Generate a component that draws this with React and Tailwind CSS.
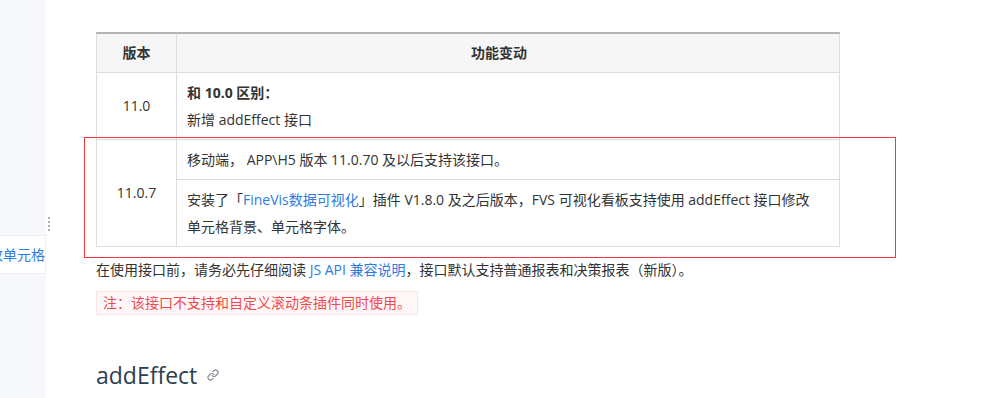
const font = { fontFamily: '"Open Sans", "Noto Sans CJK SC", sans-serif' };

function Sidebar() {
  return (
    <aside className="relative w-[46px] shrink-0 bg-[#f7f8fb]">
      <div className="mt-[235px] flex h-[39px] w-[46px] items-center justify-end overflow-hidden border-y border-r border-[#ebedf0] bg-white">
        <span className="whitespace-nowrap text-[14px] text-[#2f7bdf]">修改单元格</span>
      </div>
      {/* resize handle */}
      <div className="absolute left-[48px] top-[217px] flex flex-col gap-[2px]">
        <span className="block h-[2px] w-[2px] bg-[#aeb3bb]" />
        <span className="block h-[2px] w-[2px] bg-[#aeb3bb]" />
        <span className="block h-[2px] w-[2px] bg-[#aeb3bb]" />
        <span className="block h-[2px] w-[2px] bg-[#aeb3bb]" />
      </div>
    </aside>
  );
}

function LinkIcon() {
  return (
    <svg width="12" height="12" viewBox="0 0 24 24" fill="none" stroke="#8a8f99" strokeWidth="2.4" strokeLinecap="round" strokeLinejoin="round">
      <path d="M10 13a5 5 0 0 0 7.54.54l3-3a5 5 0 0 0-7.07-7.07l-1.72 1.71" />
      <path d="M14 11a5 5 0 0 0-7.54-.54l-3 3a5 5 0 0 0 7.07 7.07l1.71-1.71" />
    </svg>
  );
}

function VersionTable() {
  return (
    <table className="w-[744px] border-collapse text-[14px] text-[#333]">
      <thead>
        <tr className="border-t-2 border-t-[#b5b5b5] bg-[#f6f6f6]">
          <th className="h-[39px] w-[80px] border border-t-0 border-[#ddd] font-bold">版本</th>
          <th className="h-[39px] border border-t-0 border-[#ddd] pr-[18px] font-bold">功能变动</th>
        </tr>
      </thead>
      <tbody className="leading-[27px]">
        <tr>
          <td className="border border-[#ddd] text-center">11.0</td>
          <td className="border border-[#ddd] px-[10px] py-[6px]">
            <div className="font-bold">和 10.0 区别：</div>
            <div>新增 addEffect 接口</div>
          </td>
        </tr>
        <tr>
          <td rowSpan={2} className="border border-[#ddd] text-center">11.0.7</td>
          <td className="border border-[#ddd] px-[10px] py-[6px]">移动端， APP\H5 版本 11.0.70 及以后支持该接口。</td>
        </tr>
        <tr>
          <td className="border border-[#ddd] py-[6px] pl-[10px] pr-[24px]">
            安装了「<span className="text-[#2f7bdf]">FineVis数据可视化</span>」插件 V1.8.0 及之后版本，FVS 可视化看板支持使用 addEffect 接口修改单元格背景、单元格字体。
          </td>
        </tr>
      </tbody>
    </table>
  );
}

export default function App() {
  return (
    <div className="flex h-[398px] w-[1008px] overflow-hidden bg-white" style={font}>
      <Sidebar />
      <main className="relative flex-1 pl-[50px] pt-[32px]">
        <VersionTable />
        {/* highlight frame */}
        <div className="pointer-events-none absolute left-[38px] top-[137px] h-[121px] w-[812px] border border-[#f5383d]" />
        <p className="mt-[9px] text-[14px] leading-[27px] text-[#333]">
          在使用接口前，请务必先仔细阅读 <span className="text-[#2f7bdf]">JS API 兼容说明</span>，接口默认支持普通报表和决策报表（新版）。
        </p>
        <div className="mt-[8px] inline-block border border-[#fde3e3] bg-[#fff7f7] px-[6px] text-[14px] leading-[22px] text-[#f04a4a]">
          注：该接口不支持和自定义滚动条插件同时使用。
        </div>
        <h2 className="mt-[44px] flex items-center gap-[10px] text-[23px] leading-[32px] text-[#2c3e50]">
          addEffect
          <LinkIcon />
        </h2>
      </main>
    </div>
  );
}
